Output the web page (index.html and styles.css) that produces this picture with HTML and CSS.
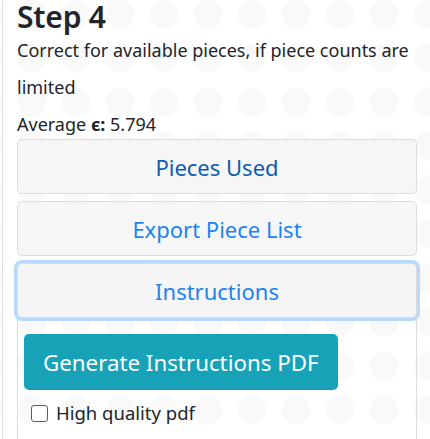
FILE: index.html
```html
<!DOCTYPE html>
<html>
<head>
<meta charset="utf-8">
<link rel="stylesheet" href="styles.css">
</head>
<body>
<div class="panel">
  <h2 class="title">Step 4</h2>
  <p class="desc">Correct for available pieces, if piece counts are limited</p>
  <p class="avg">Average <b>ϵ:</b> 5.794</p>
  <div class="accordion">
    <div class="card"><div class="card-header"><span class="link dark">Pieces Used</span></div></div>
    <div class="card"><div class="card-header"><span class="link">Export Piece List</span></div></div>
    <div class="card open">
      <div class="card-header focus"><span class="link">Instructions</span></div>
      <div class="card-body">
        <button class="btn-info">Generate Instructions PDF</button>
        <label class="check"><input type="checkbox" class="box"> High quality pdf</label>
      </div>
    </div>
  </div>
</div>
</body>
</html>
```
FILE: styles.css
```css
html, body { margin: 0; padding: 0; }
body {
  font-family: "Noto Sans", "Open Sans", sans-serif;
  color: #212529;
  background-color: #ffffff;
  background-image: radial-gradient(circle, #f9f9f9 14px, transparent 15px);
  background-size: 44px 44px;
  background-position: 10px -8px;
  height: 439px;
  overflow: hidden;
}
.panel {
  margin-left: 2px;
  border-left: 1px solid #dedede;
  padding: 0 13px 0 14px;
  height: 439px;
  overflow: hidden;
}
.title {
  margin: 0;
  font-size: 30px;
  font-weight: 600;
  line-height: 34px;
  letter-spacing: -0.2px;
}
.desc {
  margin: -2px 0 0;
  font-size: 18px;
  line-height: 37px;
}
.avg {
  margin: 4px 0 0;
  font-size: 18px;
  line-height: 28px;
}
.avg b { font-weight: 700; }
.accordion {
  display: flex;
  flex-direction: column;
  gap: 7px;
  margin-top: 1px;
}
.card {
  border: 1px solid #dcdcdc;
  border-radius: 5px;
  background: rgba(245,245,245,0.92);
}
.card-header {
  height: 53px;
  display: flex;
  align-items: center;
  justify-content: center;
  border-radius: 5px;
}
.card.open {
  border: none;
  background: none;
}
.card.open .card-header {
  border: 1px solid #dcdcdc;
  background: #f5f5f5;
  box-shadow: 0 0 0 3px #b9d9fc;
}
.link {
  font-size: 22px;
  color: #1a84f2;
}
.link.dark { color: #0f5cb0; }
.card-body {
  border-left: 1px solid #dcdcdc;
  border-right: 1px solid #dcdcdc;
  padding: 16px 6px 0;
  height: 200px;
}
.btn-info {
  display: block;
  font-family: inherit;
  background: #17a2b8;
  color: #fff;
  border: none;
  border-radius: 5px;
  font-size: 22.3px;
  height: 56px;
  padding: 0 19px;
}
.check {
  display: flex;
  align-items: center;
  gap: 8px;
  margin-top: 10px;
  padding-left: 7px;
  font-size: 18.5px;
  line-height: 26px;
}
.box {
  appearance: none;
  margin: 0;
  width: 17px;
  height: 17px;
  border: 1.5px solid #5f5f5f;
  border-radius: 3px;
  background: #fff;
}
```
